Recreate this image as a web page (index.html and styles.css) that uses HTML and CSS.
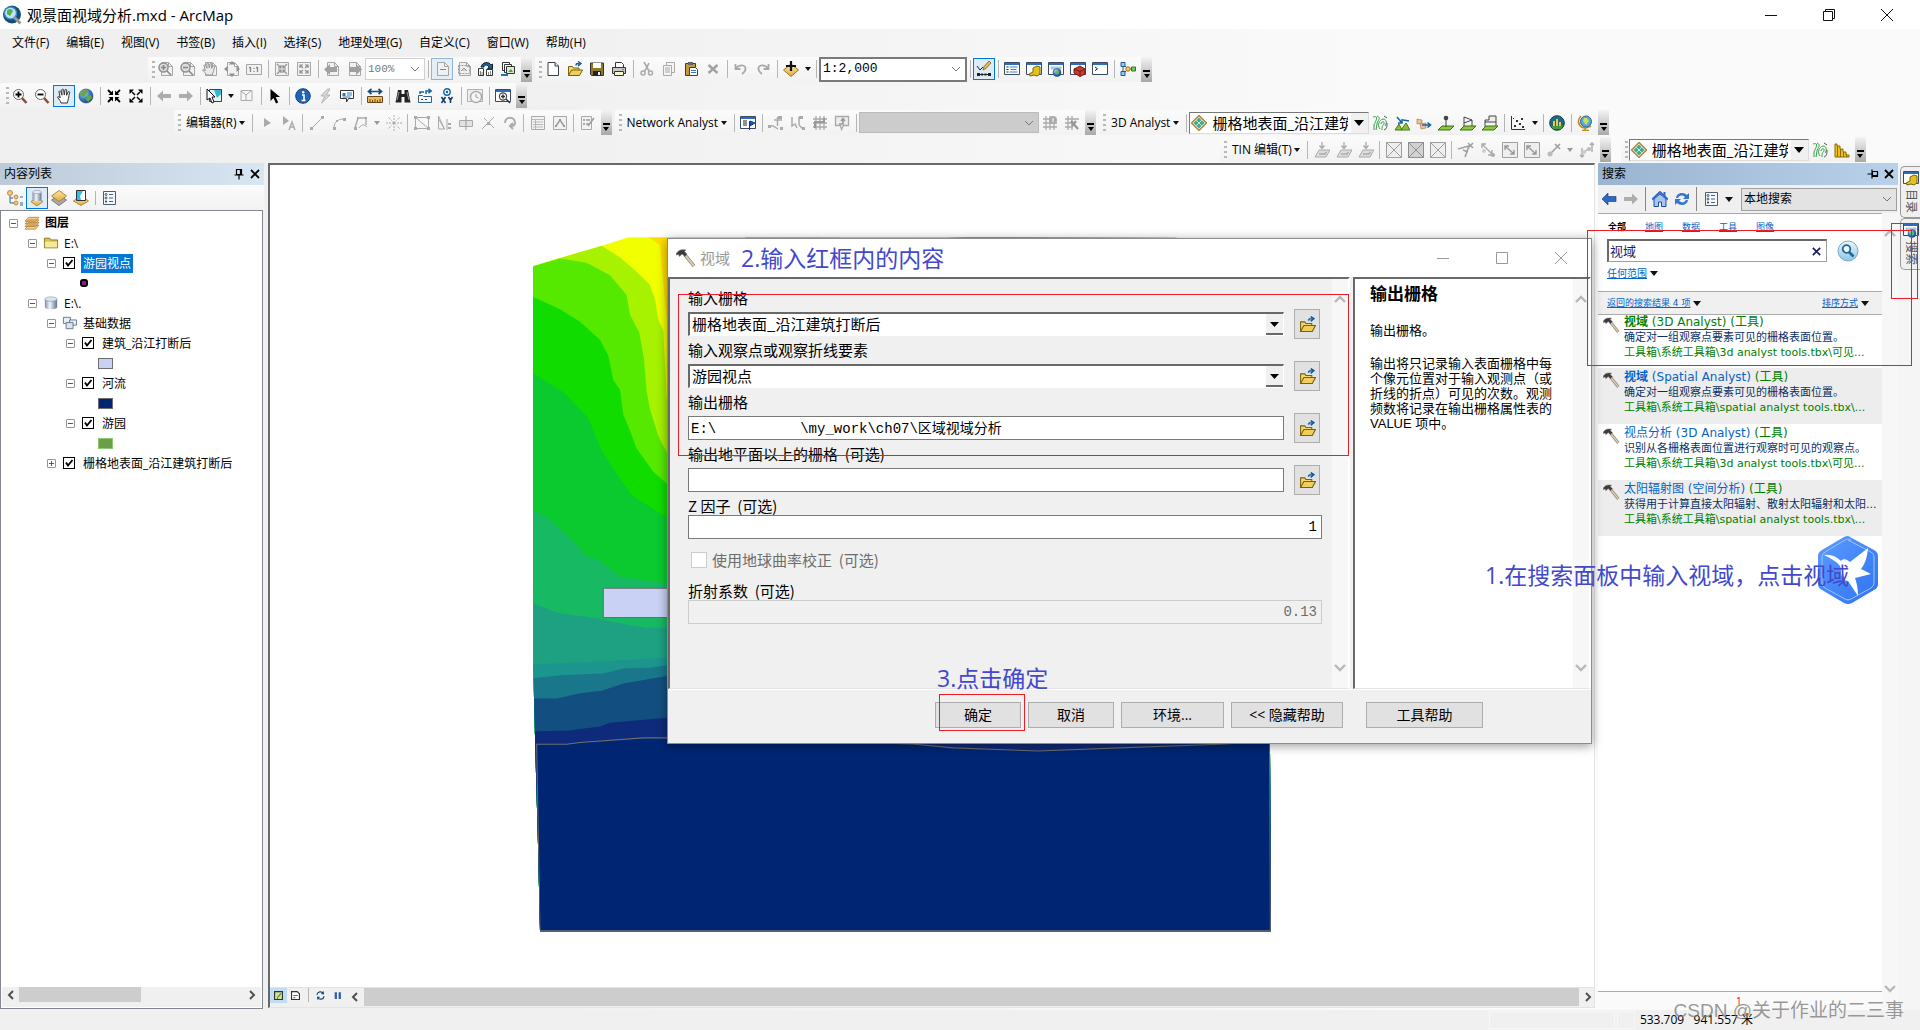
FILE: index.html
```html
<!DOCTYPE html>
<html lang="zh-CN">
<head>
<meta charset="utf-8">
<title>观景面视域分析.mxd - ArcMap</title>
<link rel="stylesheet" href="styles.css">
</head>
<body>
<svg class="defs" aria-hidden="true">
  <defs>
    <linearGradient id="gold" x1="0" y1="0" x2="0" y2="1"><stop offset="0" stop-color="#ffe9a8"/><stop offset="1" stop-color="#e0a93c"/></linearGradient>
    <linearGradient id="steel" x1="0" y1="0" x2="1" y2="0"><stop offset="0" stop-color="#7d8ea6"/><stop offset=".4" stop-color="#f2f6fb"/><stop offset="1" stop-color="#61738f"/></linearGradient>
    <radialGradient id="sea" cx=".35" cy=".3" r=".8"><stop offset="0" stop-color="#bfe4ff"/><stop offset=".5" stop-color="#3a7fc4"/><stop offset="1" stop-color="#123a78"/></radialGradient>
    <linearGradient id="lens" x1="0" y1="0" x2="0" y2="1"><stop offset="0" stop-color="#e9f7fd"/><stop offset="1" stop-color="#8cc6e4"/></linearGradient>
    <linearGradient id="bird" x1="0" y1="0" x2="1" y2="1"><stop offset="0" stop-color="#5c9bff"/><stop offset="1" stop-color="#2f74f0"/></linearGradient>
  </defs>
  <symbol id="page" viewBox="0 0 16 16"><path d="M3.500 1.500h7l4 4v9h-11z" fill="#f1f1f1" stroke="#a6a6a6"/><path d="M10.500 1.500v4h4" fill="none" stroke="#a6a6a6"/></symbol>
  <symbol id="pzin" viewBox="0 0 16 16"><use href="#page"/><circle cx="5.500" cy="6.500" r="4.500" fill="#ddd" stroke="#929292" stroke-width="1.500"/><path d="M3 6.500h5M5.500 4v5M9 10l4 4" stroke="#888" stroke-width="1.600"/></symbol>
  <symbol id="pzout" viewBox="0 0 16 16"><use href="#page"/><circle cx="5.500" cy="6.500" r="4.500" fill="#ddd" stroke="#929292" stroke-width="1.500"/><path d="M3 6.500h5M9 10l4 4" stroke="#888" stroke-width="1.600"/></symbol>
  <symbol id="hand" viewBox="0 0 16 16"><path d="M5 15c-.5-2-1.500-3-3.500-6 .8-1 1.700-.5 2.700.8L3 3.500C3.500 2.500 4.500 2.700 4.800 3.500L6 7.200 5.800 1.700C6.300.8 7.300.9 7.600 1.700L8.300 7 9 1.900c.5-.8 1.500-.7 1.700.2L10.600 7.300 12.200 3.800c.6-.7 1.500-.3 1.500.5-.5 2-1 4-1.200 6-.2 2-1 3-1.200 4.700z" fill="#fff" stroke="#333"/></symbol>
  <symbol id="phand" viewBox="0 0 16 16"><use href="#page"/><path d="M4 14c-.5-2-1.500-3-3.500-5 .8-1 1.700-.5 2.700.8L2 4.500C2.500 3.500 3.500 3.700 3.800 4.500L5 7.200 4.800 2.700C5.300 1.800 6.300 1.900 6.600 2.700L7.300 7 8 2.900c.5-.8 1.500-.7 1.700.2L9.600 7.300 11.200 4.800c.6-.7 1.500-.3 1.500.5-.5 2-1 4-1.200 5-.2 1-1 2-1.200 3.700z" fill="#e9e9e9" stroke="#929292"/></symbol>
  <symbol id="pfull" viewBox="0 0 16 16"><use href="#page"/><path d="M8 0l3 3.500H5zM8 16l3-3.500H5zM0 8l3.500-3v6zM16 8l-3.500-3v6z" fill="#8f8f8f"/></symbol>
  <symbol id="p11" viewBox="0 0 16 16"><path d="M.5 3.500h15v10H.5z" fill="#f1f1f1" stroke="#a6a6a6"/><path d="M4.500 6v5M11.500 6v5M8 7v1M8 10v1M3 6.500h1.500M10 6.500h1.500" stroke="#888" stroke-width="1.300"/></symbol>
  <symbol id="gfixin" viewBox="0 0 16 16"><path d="M1.500 1.500h13v13h-13z" fill="#f1f1f1" stroke="#a6a6a6"/><path d="M3 3l4 4M13 3L9 7M3 13l4-4M13 13l-4-4M7 4v3h-3M9 4v3h3M4 9h3v3M12 9h-3v3" fill="none" stroke="#909090" stroke-width="1.200"/></symbol>
  <symbol id="gfixout" viewBox="0 0 16 16"><path d="M1.500 1.500h13v13h-13z" fill="#f1f1f1" stroke="#a6a6a6"/><path d="M4 4l3 3M12 4L9 7M4 12l3-3M12 12l-3-3M4 7V4h3M12 7V4h-3M4 9v3h3M12 9v3h-3" fill="none" stroke="#909090" stroke-width="1.200"/></symbol>
  <symbol id="pback" viewBox="0 0 16 16"><use href="#page"/><path d="M0 8.500l6-5.500v3h7v5H6v3z" fill="#a0a0a0"/></symbol>
  <symbol id="pfwd" viewBox="0 0 16 16"><use href="#page"/><path d="M16 8.500L10 3v3H3v5h7v3z" fill="#a0a0a0"/></symbol>
  <symbol id="draft" viewBox="0 0 16 16"><use href="#page"/><path d="M6 8.500h6" stroke="#888"/></symbol>
  <symbol id="focus" viewBox="0 0 16 16"><use href="#page"/><path d="M2.500 4.500h11v8h-11z" fill="none" stroke="#999" stroke-dasharray="2 1"/><path d="M5 10l3-3 3 3" fill="#ccc" stroke="#999"/></symbol>
  <symbol id="swap" viewBox="0 0 16 16"><path d="M3 6C4 1 11 0 13 4l1.500-1v5h-5L11 6C9 3 6 4 6 6z" fill="#16629d" stroke="#123"/><path d="M.5 7.500h5v7h-5zM8.500 8.500h6v6h-6z" fill="#fff" stroke="#333"/><path d="M2.500 10v4M4 11v3M10.500 11v3M12.500 10v4" stroke="#888"/></symbol>
  <symbol id="pages" viewBox="0 0 16 16"><path d="M2.500 1.500h7v8h-7z" fill="#fff" stroke="#333"/><path d="M4.500 3.500h7v8h-7z" fill="#fff" stroke="#333"/><path d="M6.500 5.500h8v7h-8z" fill="#d5efcf" stroke="#333"/><path d="M8 11l3-3 2 3" fill="#53a33b"/><path d="M1 13h7v2H1z" fill="#2873b8"/></symbol>
  <symbol id="new" viewBox="0 0 16 16"><path d="M3 1.500h7l3.500 3.500v9.500H3z" fill="#fff" stroke="#38424e"/><path d="M10 1.500V5h3.500" fill="#dce6f2" stroke="#38424e"/></symbol>
  <symbol id="open" viewBox="0 0 16 16"><path d="M1.500 14.500v-9h4l1 1.500h5.500v7z" fill="#f6d873" stroke="#77600f"/><path d="M1.500 14.500l3-5.500h11l-3 5.500z" fill="#f0cd5c" stroke="#77600f"/><path d="M9 4.500c0-2 1-2 3.500-2M11 .5l3 2-3 2.500" fill="none" stroke="#155a9c" stroke-width="1.400"/></symbol>
  <symbol id="save" viewBox="0 0 16 16"><path d="M1.500 2h13v12.500h-12l-1-1z" fill="#8c7a28" stroke="#333"/><path d="M4 2h8v5H4z" fill="#fff"/><path d="M4 10h8v4.500H4z" fill="#222"/><path d="M9 11h2v3H9z" fill="#eee"/></symbol>
  <symbol id="print" viewBox="0 0 16 16"><path d="M4.500 6V1.500h6l2 2V6" fill="#fff" stroke="#333"/><path d="M1.500 6.500h13v6h-13z" fill="#c9c9c9" stroke="#333"/><path d="M3.500 10.500h9v4h-9z" fill="#f8f7d0" stroke="#333"/><path d="M11 8h2v1h-2z" fill="#3b3"/></symbol>
  <symbol id="cut" viewBox="0 0 16 16"><path d="M5 1l5 9M10 2L7 8l-2 3" fill="none" stroke="#aaa" stroke-width="1.600"/><circle cx="4" cy="12" r="2" fill="none" stroke="#aaa" stroke-width="1.500"/><circle cx="11.500" cy="12" r="2" fill="none" stroke="#aaa" stroke-width="1.500"/></symbol>
  <symbol id="copy" viewBox="0 0 16 16"><path d="M5.500 1.500h8v10h-8z" fill="#f4f4f4" stroke="#aaa"/><path d="M2.500 4.500h8v10h-8z" fill="#f4f4f4" stroke="#aaa"/><path d="M4 7h5M4 9h5M4 11h5" stroke="#aaa"/></symbol>
  <symbol id="paste" viewBox="0 0 16 16"><path d="M2.500 2.500h10v12h-10z" fill="#c79a3c" stroke="#4b3a14"/><path d="M5 1h5v3H5z" fill="#666"/><path d="M6.500 6.500h6l2 2v6h-8z" fill="#fff" stroke="#345"/><path d="M8 9.500h5M8 11.500h5" stroke="#3a78b5"/></symbol>
  <symbol id="del" viewBox="0 0 16 16"><path d="M3.500 4l9 8M12.500 4l-9 8" stroke="#a2a2a2" stroke-width="2.400"/></symbol>
  <symbol id="undo" viewBox="0 0 16 16"><path d="M2.500 3v5h5M3 7.500C6 3 13 3.500 12.500 8c0 2-1.500 3.500-3.500 5" fill="none" stroke="#aaa" stroke-width="1.800"/></symbol>
  <symbol id="redo" viewBox="0 0 16 16"><path d="M13.500 3v5h-5M13 7.500C10 3 3 3.500 3.500 8c0 2 1.500 3.500 3.500 5" fill="none" stroke="#aaa" stroke-width="1.800"/></symbol>
  <symbol id="add" viewBox="0 0 16 16"><path d="M8 3l7.500 6L8 15.500.5 9z" fill="url(#gold)" stroke="#9a7320"/><path d="M8 0v10M3 5h10" stroke="#111" stroke-width="2.200"/></symbol>
  <symbol id="edit" viewBox="0 0 16 16"><path d="M1 5l3 4 3-3M2 13.500h12" fill="none" stroke="#222"/><path d="M7 9l1-3.500L13 0l2 2-5 5.500z" fill="#f2b64c" stroke="#6b4a12" stroke-width=".7"/><path d="M1 12h3v3H1zM5 12.500h2v2H5zM8.500 12.500h2v2h-2zM12 12h3v3h-3z" fill="#222"/></symbol>
  <symbol id="win" viewBox="0 0 16 16"><path d="M.5 1.500h15v12H.5z" fill="#fff" stroke="#3b4a60"/><path d="M1 2h14v2H1z" fill="#2d6dbf"/></symbol>
  <symbol id="wtoc" viewBox="0 0 16 16"><use href="#win"/><path d="M2.500 6h2M2.500 8.500h2M2.500 11h2" stroke="#222"/><path d="M5.500 6h8M6.500 8.500h6M5.500 11h8" stroke="#3b82c8"/></symbol>
  <symbol id="wcat" viewBox="0 0 16 16"><use href="#win"/><path d="M7 7l4-2 3 1v7l-3 2-3-1-4 1-1-2 4-2z" fill="#e3c21d" stroke="#77640c"/></symbol>
  <symbol id="wsearch" viewBox="0 0 16 16"><use href="#win"/><path d="M3 6h10v2H3z" fill="#ccd8ea" stroke="#7990ae" stroke-width=".5"/><circle cx="9" cy="11.500" r="4" fill="url(#sea)" stroke="#1b4d7d" stroke-width=".6"/><path d="M7 10l3-1 1 3-2 2z" fill="#71b84d"/></symbol>
  <symbol id="wbox" viewBox="0 0 16 16"><use href="#win"/><path d="M4 8l6-3 5 3v5l-5 2.500L4 12z" fill="#c93c31" stroke="#701810"/><path d="M4 8l6 2.500L15 8M10 10.500v5" stroke="#701810" fill="none"/></symbol>
  <symbol id="wpy" viewBox="0 0 16 16"><use href="#win"/><path d="M3 6l2.500 1.800L3 9.600" fill="none" stroke="#222"/></symbol>
  <symbol id="model" viewBox="0 0 16 16"><path d="M3 3v10M3 3l5 5-5 5M8 8h5" fill="none" stroke="#456"/><path d="M1 1.500h4v4H1zM1 10.500h4v4H1z" fill="#9cc8f0" stroke="#1d5a9a"/><circle cx="8" cy="8" r="2.200" fill="#f4d34f" stroke="#93761a"/><path d="M11.500 6h4v4h-4z" fill="#74c860" stroke="#2a7a22"/></symbol>
  <symbol id="zin" viewBox="0 0 16 16"><path d="M10 10l4.500 5" stroke="#8b4b37" stroke-width="2.600"/><circle cx="6.500" cy="6.500" r="5" fill="#fff" stroke="#666"/><path d="M3.500 6.500h6M6.500 3.500v6" stroke="#000" stroke-width="1.800"/></symbol>
  <symbol id="zout" viewBox="0 0 16 16"><path d="M10 10l4.500 5" stroke="#8b4b37" stroke-width="2.600"/><circle cx="6.500" cy="6.500" r="5" fill="#fff" stroke="#666"/><path d="M3.500 6.500h6" stroke="#000" stroke-width="1.800"/></symbol>
  <symbol id="globe" viewBox="0 0 16 16"><circle cx="8" cy="8" r="7" fill="url(#sea)" stroke="#174472" stroke-width=".6"/><path d="M5 2c3-1 4 0 5 2L8 6 6 9 2 7zM9 8l4-1 1 3-4 4-2-3z" fill="#68a83c"/></symbol>
  <symbol id="fixin" viewBox="0 0 16 16"><path d="M2 2l4 4M14 2l-4 4M2 14l4-4M14 14l-4-4" stroke="#000" stroke-width="1.800"/><path d="M7 2.500V7H2.500zM9 2.500V7h4.500zM7 13.500V9H2.500zM9 13.500V9h4.500z"/></symbol>
  <symbol id="fixout" viewBox="0 0 16 16"><path d="M4 4l3 3M12 4L9 7M4 12l3-3M12 12l-3-3" stroke="#000" stroke-width="1.500"/><path d="M1.500 1.500H6L1.500 6zM14.500 1.500H10L14.500 6zM1.500 14.500H6L1.500 10zM14.500 14.500H10l4.500-4.500z"/></symbol>
  <symbol id="gback" viewBox="0 0 16 16"><path d="M1 8l6-5.500v3.500h8v4H7v3.500z" fill="#adadad"/></symbol>
  <symbol id="gfwd" viewBox="0 0 16 16"><path d="M15 8L9 2.500V6H1v4h8v3.500z" fill="#adadad"/></symbol>
  <symbol id="selfeat" viewBox="0 0 16 16"><path d="M3.500 1.500h12v12h-12z" fill="#e6f3ec" stroke="#345"/><path d="M8 2h7v4l-4 4z" fill="#35b8d8"/><path d="M1 1l8 8H6l2 5-2 1-2-5-3 2z" fill="#fff" stroke="#111"/></symbol>
  <symbol id="clear" viewBox="0 0 16 16"><path d="M2 2.500h11v10H2zM2 3l5 4 5-4M7 7v5" fill="#f6f6f6" stroke="#aaa"/></symbol>
  <symbol id="cursor" viewBox="0 0 16 16"><path d="M3.500 1v12l3-3 2.500 5.500 2.200-1L8.700 9H13z"/></symbol>
  <symbol id="info" viewBox="0 0 16 16"><circle cx="8" cy="8" r="7.300" fill="#2264b8" stroke="#123f7e"/><path d="M7 7h2v5.500M6.500 12.500h4" fill="none" stroke="#fff" stroke-width="1.600"/><circle cx="8.200" cy="4.200" r="1.200" fill="#fff"/></symbol>
  <symbol id="bolt" viewBox="0 0 16 16"><path d="M10.500 1L4 8h4l-3.500 7L13 7H9l4-6z" fill="#ddd" stroke="#b0b0b0"/></symbol>
  <symbol id="popup" viewBox="0 0 16 16"><path d="M1.500 2.500h13v8h-5L7.500 14V10.500h-6z" fill="#fff" stroke="#333"/><path d="M3.500 5h3v3h-3z" fill="#2d77c2"/><path d="M8 5h5M8 7h5M3.500 9h8" stroke="#2d77c2"/></symbol>
  <symbol id="ruler" viewBox="0 0 16 16"><path d="M2 3.500h12M4.500 1L1.500 3.500l3 2.500M11.500 1l3 2.500-3 2.500" stroke="#134f86" fill="none" stroke-width="1.700"/><path d="M.5 8.500h15v6H.5z" fill="#eebb62" stroke="#6a4917"/><path d="M3 14v-3M5.500 14v-2M8 14v-3M10.500 14v-2M13 14v-3" stroke="#6a4917"/></symbol>
  <symbol id="bino" viewBox="0 0 16 16"><path d="M3 2h3.500v4h3V2H13l2.500 12.500h-6V9h-3v5.500h-6z" fill="#222"/><path d="M4 4l-2 8M12 4l2 8" stroke="#999"/></symbol>
  <symbol id="route" viewBox="0 0 16 16"><path d="M1.500 7.500h4l1 1h8v6h-13z" fill="#f3f6fa" stroke="#345f85"/><path d="M4 11.500h2M8 11.500h2" stroke="#246"/><path d="M9 6V3h4M11.500.8L14.200 3l-2.700 2.200M3 6V4h4" fill="none" stroke="#1564a5" stroke-width="1.500"/></symbol>
  <symbol id="xy" viewBox="0 0 16 16"><circle cx="8" cy="4" r="3.200" fill="none" stroke="#1564a5" stroke-width="1.400"/><circle cx="8" cy="4" r="1.200" fill="#1564a5"/><path d="M2.500 9l4 6M6.500 9l-4 6M9.500 9l2 3 2-3M11.500 12v3" fill="none" stroke="#123f72" stroke-width="1.600"/></symbol>
  <symbol id="clock" viewBox="0 0 16 16"><path d="M.5 1.500h15v12H.5z" fill="#eee" stroke="#b0b0b0"/><circle cx="9" cy="9" r="5.500" fill="#f4f4f4" stroke="#aaa" stroke-width="1.400"/><path d="M9 6v3l2.500 1" fill="none" stroke="#999"/></symbol>
  <symbol id="viewer" viewBox="0 0 16 16"><use href="#win"/><circle cx="8" cy="8.500" r="3.600" fill="#fff" stroke="#444" stroke-width="1.200"/><path d="M6 8.500h4M8 6.500v4M11 11l4 4" stroke="#333" stroke-width="1.500"/></symbol>
  <symbol id="gcur" viewBox="0 0 16 16"><path d="M5 3l7 5-7 4z" fill="#aaa"/></symbol>
  <symbol id="gcura" viewBox="0 0 16 16"><path d="M2 1l6 5-6 4z" fill="#aaa"/><path d="M8 15l3-8 3 8M9.200 12h3.600" fill="none" stroke="#aaa" stroke-width="1.400"/></symbol>
  <symbol id="seg" viewBox="0 0 16 16"><path d="M3 13L13 3" stroke="#aaa"/><path d="M1 12h3v3H1zM12 1h3v3h-3z" fill="#aaa"/></symbol>
  <symbol id="arc" viewBox="0 0 16 16"><path d="M3 13C3 7 7 4 13 4" fill="none" stroke="#aaa"/><path d="M2 12h3v3H2zM12 3h3v3h-3zM5 5h2v2H5z" fill="#aaa"/></symbol>
  <symbol id="poly" viewBox="0 0 16 16"><path d="M2 13L5 3h8v7" fill="none" stroke="#aaa" stroke-width="1.400"/><path d="M1 12h3v3H1zM4 2h2v2H4zM12 2h2v2h-2z" fill="#aaa"/><path d="M6 13c3-4 5-4 8-1" fill="none" stroke="#aaa"/></symbol>
  <symbol id="burst" viewBox="0 0 16 16"><path d="M8 0v5M8 11v5M0 8h5M11 8h5M2.500 2.500l3 3M13.500 2.500l-3 3M2.500 13.500l3-3M13.500 13.500l-3-3" stroke="#aaa" stroke-dasharray="2 1"/><path d="M6.500 6.500h3v3h-3z" fill="#aaa"/></symbol>
  <symbol id="tri" viewBox="0 0 16 16"><path d="M1.500 2.500h13v11h-13zM1.500 2.500l13 11" fill="none" stroke="#aaa"/><path d="M0 1h3v3H0zM13 1h3v3h-3zM13 12h3v3h-3zM0 12h3v3H0z" fill="#aaa"/></symbol>
  <symbol id="tri2" viewBox="0 0 16 16"><path d="M2.500 1v13h6zM2.500 4l6 10M11 4v11" fill="none" stroke="#aaa"/><path d="M12 8h3v2h-3zM12 12h3v2h-3z" fill="#aaa"/></symbol>
  <symbol id="split" viewBox="0 0 16 16"><path d="M1.500 5.500h13v6h-13z" fill="#e2e2e2" stroke="#aaa"/><path d="M8 1v14" stroke="#999"/></symbol>
  <symbol id="cross" viewBox="0 0 16 16"><path d="M2 14L14 2M4 3l3 3M10 9l4 4" stroke="#aaa"/><path d="M7 7h3v3H7z" fill="#aaa"/></symbol>
  <symbol id="rot" viewBox="0 0 16 16"><path d="M3 8C3 1 13 1 13 8c0 2-2 3-4 3M11 8l-3 3 3 3" fill="none" stroke="#aaa" stroke-width="2"/></symbol>
  <symbol id="table" viewBox="0 0 16 16"><path d="M1.500 1.500h13v13h-13z" fill="#f2f2f2" stroke="#aaa"/><path d="M1.500 4.500h13M3 7h10M3 9.500h10M3 12h10M5.500 5v9" stroke="#bbb"/></symbol>
  <symbol id="sketch" viewBox="0 0 16 16"><path d="M1.500 1.500h13v13h-13z" fill="#f2f2f2" stroke="#aaa"/><path d="M4 11l4-6 4 6" fill="none" stroke="#999" stroke-width="1.400"/><path d="M3 10h2v2H3zM7 4h2v2H7zM11 10h2v2h-2z" fill="#999"/></symbol>
  <symbol id="form" viewBox="0 0 16 16"><path d="M1.500 1.500h10v13h-10z" fill="#f2f2f2" stroke="#aaa"/><path d="M3 4h2v2H3zM3 8h2v2H3z" fill="#aaa"/><path d="M6 5h4M6 9h3M8 11l6-8" stroke="#999" stroke-width="1.500"/></symbol>
  <symbol id="nawin" viewBox="0 0 16 16"><use href="#win"/><path d="M3 6h4M3 8h4M3 10h4" stroke="#222"/><path d="M9.500 6v9M10 6l5 2-5 3z" fill="#1c55d6" stroke="#123a8c"/></symbol>
  <symbol id="naadd" viewBox="0 0 16 16"><path d="M1 11h4l5 3M9.500 2v9M6 5h8" fill="none" stroke="#aaa" stroke-width="1.400"/><path d="M0 10h3v3H0zM12 12h3v3h-3zM10 1h4v3h-4z" fill="#aaa"/></symbol>
  <symbol id="nasel" viewBox="0 0 16 16"><path d="M2 2v9l3-2 2 4M9 10V2M9 10l4 4" fill="none" stroke="#aaa" stroke-width="1.500"/><path d="M9 1h4v3H9zM12 12h3v3h-3z" fill="#aaa"/></symbol>
  <symbol id="grid" viewBox="0 0 16 16"><path d="M1 4h14M1 8h14M1 12h14M4 1v14M8 1v14M12 1v14" stroke="#aaa" stroke-width="1.300"/><path d="M3 13V7h9V3" fill="none" stroke="#999" stroke-width="2"/></symbol>
  <symbol id="dir" viewBox="0 0 16 16"><path d="M1.500 1.500h13v9h-5l-2 4-1-4h-5z" fill="#eee" stroke="#aaa" stroke-width="1.300"/><path d="M5 9h4V4M7 6l2-2.500L11 6" fill="none" stroke="#999" stroke-width="1.600"/></symbol>
  <symbol id="griq" viewBox="0 0 16 16"><path d="M1 4h9M1 8h14M1 12h14M4 1v14M8 1v14M12 9v6" stroke="#aaa" stroke-width="1.300"/><circle cx="11" cy="5" r="4" fill="#aaa"/><path d="M11 3v4" stroke="#fff"/></symbol>
  <symbol id="griw" viewBox="0 0 16 16"><path d="M1 4h14M1 8h8M1 12h8M4 1v14M8 1v14" stroke="#aaa" stroke-width="1.300"/><path d="M7 6l7 8M12 6l-4 5" stroke="#999" stroke-width="2.400"/></symbol>
  <symbol id="layer" viewBox="0 0 16 16"><path d="M8 .5L15.500 8 8 15.500.5 8z" fill="#f4ead4" stroke="#a8803a" stroke-width="1.300"/><path d="M8 2.500L13.500 8 8 13.500 2.500 8z" fill="#45a98f"/><path d="M5.200 5.200l5.600 5.600M10.800 5.200l-5.600 5.600" stroke="#c5eadb"/></symbol>
  <symbol id="contour" viewBox="0 0 16 16"><path d="M1 2c7-2 2 5 1 8v5M5 1c5 2 0 5 0 8l-1 6M8 14c-3-4-1-9 3-10 4 0 4 5 2 7M9 9c0-3 4-3 3 0-1 2-2 1-2 6" fill="none" stroke="#35a047"/><path d="M12 1l3 2M12 15c3-1 3-4 3-7" stroke="#555" fill="none"/></symbol>
  <symbol id="steep" viewBox="0 0 16 16"><path d="M1 15l4-6 3 6zM7 15l5-7 4 7z" fill="#8bbf3a" stroke="#4a781c"/><path d="M3 2l5 6M8 4v4H4M9 5l6 1" fill="none" stroke="#1563a8" stroke-width="1.500"/></symbol>
  <symbol id="los" viewBox="0 0 16 16"><path d="M1 4l5 1v3l-5 1zM4 9l6-1v5l-5 1z" fill="#f3bd8f" stroke="#a36b3a" stroke-width=".6"/><path d="M6 10h8M11.500 7.500L14.500 10l-3 2.500" fill="none" stroke="#1563a8" stroke-width="1.600"/></symbol>
  <symbol id="pt3" viewBox="0 0 16 16"><path d="M4 11h12l-4 4H0z" fill="#8cc540" stroke="#3f7217"/><path d="M8 3v9" stroke="#444"/><circle cx="8" cy="3" r="2.300" fill="#444"/></symbol>
  <symbol id="ln3" viewBox="0 0 16 16"><path d="M4 11h12l-4 4H0z" fill="#8cc540" stroke="#3f7217"/><path d="M4 2l8 3-8 3M4 2v9M12 5v6" fill="none" stroke="#444"/></symbol>
  <symbol id="pg3" viewBox="0 0 16 16"><path d="M4 11h12l-4 4H0z" fill="#8cc540" stroke="#3f7217"/><path d="M7 1h7v6H3v-2h4zM3 7v5M14 7v4" fill="#eee" stroke="#444"/></symbol>
  <symbol id="plot" viewBox="0 0 16 16"><path d="M1.500 1v13.500H15" fill="none" stroke="#333"/><path d="M4 10h2v2H4zM6 5h2v2H6zM9 8h2v2H9zM11 3h2v2h-2zM12 11h2v2h-2zM3 3h1v1H3z" fill="#333"/></symbol>
  <symbol id="scene" viewBox="0 0 16 16"><circle cx="8" cy="8" r="7.300" fill="#1d6b7c" stroke="#103c52"/><path d="M4 11V6h2v5M7 11V4h2v7M10 11V7h2v4" fill="#e8c84c"/><path d="M2 11h12l-2 3H4z" fill="#4a9a35"/></symbol>
  <symbol id="gl3" viewBox="0 0 16 16"><path d="M4 1C-1 6 2 13 9 13l5-2M8 13v2M5 15.500h7" fill="none" stroke="#b98b1f" stroke-width="1.600"/><circle cx="9" cy="6.500" r="5.500" fill="#58a6dc" stroke="#2a6598"/><path d="M7 3l3 0 2 3-3 4-3-4z" fill="#c9df5b"/></symbol>
  <symbol id="tin1" viewBox="0 0 16 16"><path d="M5 8h11l-4 7H1z" fill="#ddd" stroke="#aaa"/><path d="M8 0v6M5.500 3.500L8 6.500l2.500-3M5 12h6l1.500-2" fill="none" stroke="#aaa" stroke-width="1.300"/></symbol>
  <symbol id="boxx" viewBox="0 0 16 16"><path d="M.5.500h15v15H.5zM.5.500l15 15M15.500.5l-15 15" fill="#eee" stroke="#a0a0a0"/></symbol>
  <symbol id="boxd" viewBox="0 0 16 16"><path d="M.5.500h15v15H.5zM.5.500l15 15M15.500.5l-15 15" fill="#d2d2d2" stroke="#8f8f8f"/></symbol>
  <symbol id="tin5" viewBox="0 0 16 16"><path d="M0 7l11-3-4 11M5 8l5 2M10 1l5 5M15 1l-5 5" fill="none" stroke="#a0a0a0" stroke-width="1.600"/></symbol>
  <symbol id="tin6" viewBox="0 0 16 16"><path d="M2 2l10 10M2 6V2h4M12 8v5H8" fill="none" stroke="#aaa" stroke-width="1.400"/><circle cx="4" cy="9" r="2" fill="#ccc"/><circle cx="13" cy="13" r="2" fill="#aaa"/></symbol>
  <symbol id="tin7" viewBox="0 0 16 16"><path d="M.5.500h15v15H.5z" fill="#eee" stroke="#a0a0a0"/><path d="M3 4l9 8M3 8V4h4M12 8v4H8" fill="none" stroke="#999" stroke-width="1.400"/></symbol>
  <symbol id="tin9" viewBox="0 0 16 16"><path d="M4 12L13 3M9 2l5 5M14 2L9 7" fill="none" stroke="#a0a0a0" stroke-width="1.700"/><circle cx="4" cy="12" r="2.500" fill="#bbb"/></symbol>
  <symbol id="tin8" viewBox="0 0 16 16"><path d="M5 10l6-4M13 10V1M11 3l2-2 2 2M3 6v9M1 13l2 2 2-2" fill="none" stroke="#aaa" stroke-width="1.400"/><circle cx="5" cy="10" r="2" fill="#ccc"/><circle cx="10" cy="7" r="2" fill="#bbb"/></symbol>
  <symbol id="bars" viewBox="0 0 16 16"><path d="M1 15V2h2v2h3v3h3v3h3v3h3v2z" fill="#efc31a" stroke="#8b6b08"/><path d="M3.500 4v11M6.500 7v8M9.500 10v5M12.500 12v3" stroke="#8b6b08"/></symbol>
  <symbol id="hammer" viewBox="0 0 20 20"><path d="M9 7l9 11" stroke="#7d7260" stroke-width="3.400"/><path d="M9 7l9 11" stroke="#d9ceb4" stroke-width="2"/><path d="M0 7c1-4 4-6 10-5L8.500 3.500 11 6 9 8.500 6 6 3.500 8.500 2.500 6.500z" fill="#3c3c3c" stroke="#777" stroke-width=".6"/></symbol>
  <symbol id="app" viewBox="0 0 20 20"><circle cx="10" cy="9.500" r="9" fill="#184d78"/><circle cx="8.500" cy="8" r="6" fill="#bfe3f5" stroke="#3b8cc0" stroke-width="1.300"/><path d="M5 6c2-3 5-2 6 0l-3 5-3-2z" fill="#58b148"/><path d="M12.500 12.500l6 6" stroke="#999" stroke-width="3"/></symbol>
  <symbol id="cyl" viewBox="0 0 16 16"><path d="M1 3.500v9c0 3.500 14 3.500 14 0v-9z" fill="url(#steel)"/><ellipse cx="8" cy="3.500" rx="7" ry="2.500" fill="#dce6f2" stroke="#8292a8" stroke-width=".7"/></symbol>
  <symbol id="tocdraw" viewBox="0 0 16 16"><circle cx="3" cy="3" r="2.500" fill="#f3c67c" stroke="#c08c3e"/><circle cx="9" cy="7" r="2" fill="#f3c67c" stroke="#c08c3e"/><circle cx="9" cy="13" r="2" fill="#f3c67c" stroke="#c08c3e"/><path d="M3 6v7h4M3 8h3M13 7h3M13 13h3M13 15h3" fill="none" stroke="#35688f"/></symbol>
  <symbol id="tocsrc" viewBox="0 0 16 16"><path d="M8 8l6 3.500L8 16l-6-4.500z" fill="url(#gold)" stroke="#b18635"/><path d="M3.500 2v7.500c0 2 9 2 9 0V2z" fill="url(#steel)"/><ellipse cx="8" cy="2" rx="4.500" ry="1.500" fill="#e9f0f8" stroke="#8292a8" stroke-width=".6"/></symbol>
  <symbol id="tocvis" viewBox="0 0 16 16"><path d="M8 5l7.500 5L8 15.500.5 10z" fill="#aaa" stroke="#777"/><path d="M8 .5L15.500 6 8 11.500.5 6z" fill="url(#gold)" stroke="#b18635"/></symbol>
  <symbol id="tocsel" viewBox="0 0 16 16"><path d="M8 6l7.500 5L8 15.500.5 11z" fill="url(#gold)" stroke="#b18635"/><path d="M3.500.5h9v10h-9z" fill="#fff" stroke="#333"/><path d="M4 1h6L7 6l1 4H4z" fill="#2cc0e6"/></symbol>
  <symbol id="opts" viewBox="0 0 16 16"><path d="M2.500 1.500h12v13h-12z" fill="#f5f9fd" stroke="#4a5d75"/><circle cx="5" cy="4.500" r="1" fill="none" stroke="#234" stroke-width=".8"/><circle cx="5" cy="8" r="1" fill="none" stroke="#234" stroke-width=".8"/><circle cx="5" cy="11.500" r="1" fill="#234"/><path d="M8 4.500h4M8 8h4M8 11.500h4" stroke="#47617f"/></symbol>
  <symbol id="layers" viewBox="0 0 16 16"><path d="M4 10.500h12L12 15H0zM4 7.500h12L12 12H0zM4 4.500h12L12 9H0zM4 1.500h12L12 6H0z" fill="#f4cd8c" stroke="#ab722e" stroke-width=".8"/></symbol>
  <symbol id="folder" viewBox="0 0 16 16"><path d="M.5 13.500v-11h6l1.500 2h7.500v9z" fill="#d8c24e" stroke="#7d6c18"/><path d="M1 6.500h14v6.500H1z" fill="#f5e998"/></symbol>
  <symbol id="dset" viewBox="0 0 16 16"><path d="M.5 1.500h8v7h-8z" fill="#e9eef5" stroke="#5d6f87"/><path d="M7.500 4.500h8v6h-8z" fill="#e9eef5" stroke="#5d6f87"/><path d="M3.500 7.500h8v7h-8z" fill="#dbe5f0" stroke="#5d6f87"/></symbol>
  <symbol id="home" viewBox="0 0 16 16"><path d="M2 8v7.500h4.500V11h3v4.500H14V8L8 3z" fill="#a9c6ee" stroke="#1e4f9e"/><path d="M0 8.500L8 1l8 7.500M12.500 1v4" fill="none" stroke="#2f6bc6" stroke-width="2"/></symbol>
  <symbol id="refresh" viewBox="0 0 16 16"><path d="M2 7c1-6 8-6 11-3l2-2v6H9l2-2C8 4 6 4 4 7zM14 9c-1 6-8 6-11 3l-2 2V8h6l-2 2c3 2 5 2 7-1z" fill="#3475ce"/></symbol>
  <symbol id="bback" viewBox="0 0 16 16"><path d="M1 8l6-6v3.500h8v5H7V14z" fill="#2d69c4" stroke="#194587" stroke-width=".7"/></symbol>
  <symbol id="pin" viewBox="0 0 12 12"><path d="M3.500 1.500h5v5h-5zM1.500 7h9M6 7v4.500M7.500 2v5" fill="none" stroke="#000" stroke-width="1.200"/></symbol>
  <symbol id="x" viewBox="0 0 12 12"><path d="M2 2l8 8M10 2l-8 8" stroke="currentColor" stroke-width="1.800"/></symbol>
  <symbol id="up" viewBox="0 0 12 12"><path d="M1 9l5-5 5 5" fill="none" stroke="#b8b8b8" stroke-width="2.400"/></symbol>
  <symbol id="down" viewBox="0 0 12 12"><path d="M1 3l5 5 5-5" fill="none" stroke="#b8b8b8" stroke-width="2.400"/></symbol>
  <symbol id="left" viewBox="0 0 12 12"><path d="M8 2L4 6l4 4" fill="none" stroke="#505050" stroke-width="2"/></symbol>
  <symbol id="right" viewBox="0 0 12 12"><path d="M4 2l4 4-4 4" fill="none" stroke="#505050" stroke-width="2"/></symbol>
</svg>

<header class="titlebar">
  <svg class="appicon"><use href="#app"/></svg>
  <h1>观景面视域分析.mxd - ArcMap</h1>
  <div class="winctl">
    <button title="最小化"><svg viewBox="0 0 14 14"><path d="M1 7.500h12"/></svg></button>
    <button title="还原"><svg viewBox="0 0 14 14"><path d="M1.500 3.500h9v9h-9zM3.500 3.500v-2h9v9h-2"/></svg></button>
    <button title="关闭"><svg viewBox="0 0 14 14"><path d="M1 1l12 12M13 1L1 13"/></svg></button>
  </div>
</header>

<nav class="menu">
  <button>文件(F)</button><button>编辑(E)</button><button>视图(V)</button><button>书签(B)</button><button>插入(I)</button><button>选择(S)</button><button>地理处理(G)</button><button>自定义(C)</button><button>窗口(W)</button><button>帮助(H)</button>
</nav>

<section class="rows">
  <div class="row row1">
    <div class="bar">
      <i class="grip"></i>
      <button class="tb" title="放大页面"><svg><use href="#pzin"/></svg></button><button class="tb" title="缩小页面"><svg><use href="#pzout"/></svg></button><button class="tb" title="平移页面"><svg><use href="#phand"/></svg></button><button class="tb" title="整页"><svg><use href="#pfull"/></svg></button><button class="tb" title="1:1"><svg><use href="#p11"/></svg></button>
      <i class="sep"></i>
      <button class="tb" title="固定放大"><svg><use href="#gfixin"/></svg></button><button class="tb" title="固定缩小"><svg><use href="#gfixout"/></svg></button>
      <i class="sep"></i>
      <button class="tb" title="上一范围"><svg><use href="#pback"/></svg></button><button class="tb" title="下一范围"><svg><use href="#pfwd"/></svg></button>
      <select class="pct" aria-label="页面缩放"><option>100%</option></select>
      <i class="sep"></i>
      <button class="tb on" title="草图模式"><svg><use href="#draft"/></svg></button><button class="tb" title="焦点数据框"><svg><use href="#focus"/></svg></button><button class="tb" title="更改布局"><svg><use href="#swap"/></svg></button><button class="tb" title="数据驱动页面"><svg><use href="#pages"/></svg></button>
      <button class="more" title="工具条选项"></button>
    </div>
    <div class="bar">
      <i class="grip"></i>
      <button class="tb" title="新建"><svg><use href="#new"/></svg></button><button class="tb" title="打开"><svg><use href="#open"/></svg></button><button class="tb" title="保存"><svg><use href="#save"/></svg></button><button class="tb" title="打印"><svg><use href="#print"/></svg></button>
      <i class="sep"></i>
      <button class="tb" title="剪切"><svg><use href="#cut"/></svg></button><button class="tb" title="复制"><svg><use href="#copy"/></svg></button><button class="tb" title="粘贴"><svg><use href="#paste"/></svg></button><button class="tb" title="删除"><svg><use href="#del"/></svg></button>
      <i class="sep"></i>
      <button class="tb" title="撤消"><svg><use href="#undo"/></svg></button><button class="tb" title="恢复"><svg><use href="#redo"/></svg></button>
      <i class="sep"></i>
      <button class="tb" title="添加数据"><svg><use href="#add"/></svg></button><i class="dd"></i>
      <i class="sep"></i>
      <select class="scale" aria-label="比例尺"><option>1:2,000</option></select>
      <i class="sep"></i>
      <button class="tb on" title="编辑器工具条"><svg><use href="#edit"/></svg></button>
      <i class="sep"></i>
      <button class="tb" title="内容列表"><svg><use href="#wtoc"/></svg></button><button class="tb" title="目录"><svg><use href="#wcat"/></svg></button><button class="tb" title="搜索"><svg><use href="#wsearch"/></svg></button><button class="tb" title="工具箱"><svg><use href="#wbox"/></svg></button><button class="tb" title="Python"><svg><use href="#wpy"/></svg></button>
      <i class="sep"></i>
      <button class="tb" title="模型构建器"><svg><use href="#model"/></svg></button>
      <button class="more" title="工具条选项"></button>
    </div>
  </div>

  <div class="row row2">
    <div class="bar">
      <i class="grip"></i>
      <button class="tb" title="放大"><svg><use href="#zin"/></svg></button><button class="tb" title="缩小"><svg><use href="#zout"/></svg></button><button class="tb on" title="平移"><svg><use href="#hand"/></svg></button><button class="tb" title="全图"><svg><use href="#globe"/></svg></button>
      <i class="sep"></i>
      <button class="tb" title="固定比例放大"><svg><use href="#fixin"/></svg></button><button class="tb" title="固定比例缩小"><svg><use href="#fixout"/></svg></button>
      <i class="sep"></i>
      <button class="tb" title="返回"><svg><use href="#gback"/></svg></button><button class="tb" title="前进"><svg><use href="#gfwd"/></svg></button>
      <i class="sep"></i>
      <button class="tb" title="选择要素"><svg><use href="#selfeat"/></svg></button><i class="dd"></i><button class="tb" title="清除所选"><svg><use href="#clear"/></svg></button>
      <i class="sep"></i>
      <button class="tb" title="选择元素"><svg><use href="#cursor"/></svg></button>
      <i class="sep"></i>
      <button class="tb" title="识别"><svg><use href="#info"/></svg></button><button class="tb" title="超链接"><svg><use href="#bolt"/></svg></button><button class="tb" title="HTML 弹出窗口"><svg><use href="#popup"/></svg></button>
      <i class="sep"></i>
      <button class="tb" title="测量"><svg><use href="#ruler"/></svg></button>
      <i class="sep"></i>
      <button class="tb" title="查找"><svg><use href="#bino"/></svg></button><button class="tb" title="查找路径"><svg><use href="#route"/></svg></button><button class="tb" title="转到 XY"><svg><use href="#xy"/></svg></button>
      <i class="sep"></i>
      <button class="tb" title="时间滑块"><svg><use href="#clock"/></svg></button>
      <i class="sep"></i>
      <button class="tb" title="查看器窗口"><svg><use href="#viewer"/></svg></button>
      <button class="more" title="工具条选项"></button>
    </div>
  </div>

  <div class="row row3">
    <div class="bar">
      <i class="grip"></i>
      <button class="tl">编辑器(R)<i class="dd"></i></button>
      <i class="sep"></i>
      <button class="tb" title="编辑工具"><svg><use href="#gcur"/></svg></button><button class="tb" title="编辑注记"><svg><use href="#gcura"/></svg></button>
      <i class="sep"></i>
      <button class="tb" title="直线段"><svg><use href="#seg"/></svg></button><button class="tb" title="弧段"><svg><use href="#arc"/></svg></button><button class="tb" title="追踪"><svg><use href="#poly"/></svg></button><i class="dd off"></i><button class="tb" title="点"><svg><use href="#burst"/></svg></button>
      <i class="sep"></i>
      <button class="tb" title="编辑折点"><svg><use href="#tri"/></svg></button><button class="tb" title="整形"><svg><use href="#tri2"/></svg></button><button class="tb" title="裁剪面"><svg><use href="#split"/></svg></button><button class="tb" title="分割"><svg><use href="#cross"/></svg></button><button class="tb" title="旋转"><svg><use href="#rot"/></svg></button>
      <i class="sep"></i>
      <button class="tb" title="属性"><svg><use href="#table"/></svg></button><button class="tb" title="草图属性"><svg><use href="#sketch"/></svg></button>
      <i class="sep"></i>
      <button class="tb" title="创建要素"><svg><use href="#form"/></svg></button>
      <button class="more" title="工具条选项"></button>
    </div>
    <div class="bar">
      <i class="grip"></i>
      <button class="tl">Network Analyst<i class="dd"></i></button>
      <i class="sep"></i>
      <button class="tb" title="网络分析窗口"><svg><use href="#nawin"/></svg></button>
      <i class="sep"></i>
      <button class="tb" title="创建网络位置"><svg><use href="#naadd"/></svg></button><button class="tb" title="选择网络位置"><svg><use href="#nasel"/></svg></button><button class="tb" title="求解"><svg><use href="#grid"/></svg></button><button class="tb" title="方向"><svg><use href="#dir"/></svg></button>
      <i class="sep"></i>
      <select class="nads" aria-label="网络数据集" disabled><option></option></select>
      <button class="tb" title="网络识别"><svg><use href="#griq"/></svg></button><button class="tb" title="构建网络"><svg><use href="#griw"/></svg></button>
      <button class="more" title="工具条选项"></button>
    </div>
    <div class="bar">
      <i class="grip"></i>
      <button class="tl">3D Analyst<i class="dd"></i></button>
      <i class="sep"></i>
      <div class="lyr"><svg><use href="#layer"/></svg><select aria-label="3D 图层"><option>栅格地表面_沿江建筑打断后</option></select></div>
      <button class="tb" title="等值线"><svg><use href="#contour"/></svg></button><button class="tb" title="最陡路径"><svg><use href="#steep"/></svg></button><button class="tb" title="通视线"><svg><use href="#los"/></svg></button><button class="tb" title="插入点"><svg><use href="#pt3"/></svg></button><button class="tb" title="插入线"><svg><use href="#ln3"/></svg></button><button class="tb" title="插入面"><svg><use href="#pg3"/></svg></button>
      <i class="sep"></i>
      <button class="tb" title="剖面图"><svg><use href="#plot"/></svg></button><i class="dd"></i>
      <i class="sep"></i>
      <button class="tb" title="ArcScene"><svg><use href="#scene"/></svg></button>
      <i class="sep"></i>
      <button class="tb" title="ArcGlobe"><svg><use href="#gl3"/></svg></button>
      <button class="more" title="工具条选项"></button>
    </div>
  </div>

  <div class="row row4">
    <div class="bar">
      <i class="grip"></i>
      <button class="tl">TIN 编辑(T)<i class="dd"></i></button>
      <i class="sep"></i>
      <button class="tb" title="添加 TIN 点"><svg><use href="#tin1"/></svg></button><button class="tb" title="添加 TIN 线"><svg><use href="#tin1"/></svg></button><button class="tb" title="添加 TIN 面"><svg><use href="#tin1"/></svg></button>
      <i class="sep"></i>
      <button class="tb" title="删除 TIN 结点"><svg><use href="#boxx"/></svg></button><button class="tb" title="按区域删除"><svg><use href="#boxd"/></svg></button><button class="tb" title="删除隔断线"><svg><use href="#boxx"/></svg></button>
      <i class="sep"></i>
      <button class="tb" title="移动结点"><svg><use href="#tin5"/></svg></button><button class="tb" title="连接结点"><svg><use href="#tin6"/></svg></button><button class="tb" title="交换边"><svg><use href="#tin7"/></svg></button><button class="tb" title="设置标签"><svg><use href="#tin7"/></svg></button><button class="tb" title="修改结点"><svg><use href="#tin9"/></svg></button><i class="dd off"></i><button class="tb" title="调整高度"><svg><use href="#tin8"/></svg></button>
      <button class="more" title="工具条选项"></button>
    </div>
    <div class="bar">
      <i class="grip tight"></i>
      <div class="lyr"><svg><use href="#layer"/></svg><select aria-label="分析图层"><option>栅格地表面_沿江建筑打断后</option></select></div>
      <button class="tb" title="等值线"><svg><use href="#contour"/></svg></button><button class="tb" title="直方图"><svg><use href="#bars"/></svg></button>
      <button class="more" title="工具条选项"></button>
    </div>
  </div>
</section>

<main>
  <aside class="toc">
    <div class="phead"><span>内容列表</span><button title="自动隐藏"><svg><use href="#pin"/></svg></button><button title="关闭"><svg><use href="#x"/></svg></button></div>
    <div class="ptools">
      <button class="tb" title="按绘制顺序列出"><svg><use href="#tocdraw"/></svg></button><button class="tb on" title="按源列出"><svg><use href="#tocsrc"/></svg></button><button class="tb" title="按可见性列出"><svg><use href="#tocvis"/></svg></button><button class="tb" title="按选择列出"><svg><use href="#tocsel"/></svg></button><i class="sep"></i><button class="tb" title="选项"><svg><use href="#opts"/></svg></button>
    </div>
    <div class="treebox">
      <ul class="tree">
        <li class="l0"><b class="pm"></b><svg><use href="#layers"/></svg><strong>图层</strong></li>
        <li class="l1"><b class="pm"></b><svg><use href="#folder"/></svg><span>E:\</span></li>
        <li class="l2"><b class="pm"></b><label><input type="checkbox" checked><span class="sel">游园视点</span></label></li>
        <li class="l2 sym"><i class="dot"></i></li>
        <li class="l1"><b class="pm"></b><svg><use href="#cyl"/></svg><span>E:\.</span></li>
        <li class="l2"><b class="pm"></b><svg><use href="#dset"/></svg><span>基础数据</span></li>
        <li class="l3"><b class="pm"></b><label><input type="checkbox" checked><span>建筑_沿江打断后</span></label></li>
        <li class="l3 sym"><i class="sw lav"></i></li>
        <li class="l3"><b class="pm"></b><label><input type="checkbox" checked><span>河流</span></label></li>
        <li class="l3 sym"><i class="sw navy"></i></li>
        <li class="l3"><b class="pm"></b><label><input type="checkbox" checked><span>游园</span></label></li>
        <li class="l3 sym"><i class="sw green"></i></li>
        <li class="l2"><b class="pm plus"></b><label><input type="checkbox" checked><span>栅格地表面_沿江建筑打断后</span></label></li>
      </ul>
      <div class="hscroll"><svg><use href="#left"/></svg><div class="track"><i class="thumb"></i></div><svg><use href="#right"/></svg></div>
    </div>
  </aside>

  <section class="view">
    <svg class="map" role="img" aria-label="地形高程图">
      <g transform="translate(250 55) scale(.33333 .35714)">
        <clipPath id="edge"><path d="M39 129L120 106 245 72 326 48H1440L1965 50 2238 72 2250 1470 2253 1992H60L54 1750 48 1550 42 1340 39 1190z"/></clipPath>
        <g clip-path="url(#edge)">
          <path fill="#f2ff00" d="M0 0H2300V2200H0z"/>
          <path fill="#ffdc00" d="M370 40L420 70 430 180 445 320H900V40z"/>
          <path fill="#d4930c" d="M675 40H958V80H675z"/>
          <path fill="#a6d800" d="M958 40H2300V80H958z"/>
          <path fill="#2e9e3e" d="M1284 50L1510 40H2300V80H1284z"/>
          <path fill="#a6f200" d="M0 140L245 72 300 105 350 145 388 180 405 220 415 280 430 310 436 420 440 500H2300V2200H0z"/>
          <path fill="#55e900" d="M0 140L120 108 200 120 270 155 320 210 330 265 358 315 372 390 380 480 390 530 415 605 440 650H2300V2200H0z"/>
          <path fill="#10dc00" d="M0 205L45 218 120 250 180 285 240 335 265 380 280 448 300 475 310 545 330 590 350 640 400 705 440 738H2300V2200H0z"/>
          <path fill="#0bca2f" d="M0 420L45 432 135 485 205 555 240 635 275 690 335 770 440 833H2300V2200H0z"/>
          <path fill="#17b963" d="M0 805L45 815 85 835 150 890 195 938 240 955 300 998 380 1010 440 1017H2300V2200H0z"/>
          <path fill="#1ea183" d="M0 1065L39 1073 110 1100 230 1115 320 1133 380 1142H2300V2200H0z"/>
          <path fill="#1c958f" d="M0 1245L250 1236 440 1226H2300V2200H0z"/>
          <path fill="#19768b" d="M0 1287L120 1275 250 1270 310 1256 390 1254 440 1247H2300V2200H0z"/>
          <path fill="#124f80" d="M0 1340H110L180 1325 245 1318 310 1298 440 1277H2300V2200H0z"/>
          <path fill="#0e2a7a" d="M0 1432L140 1430 240 1418 270 1408 440 1394H2300V2200H0z"/>
          <path fill="#002673" stroke="#6e6e6e" stroke-width="3" d="M60 1990L50 1468H140L180 1463 370 1450 440 1450 1176 1467 1300 1478 1554 1487 1800 1478 2100 1468 2249 1460 2251 1990z"/>
        </g>
        <path d="M250 1031H700V1113H250z" fill="#c9d2f5" stroke="#6e6e6e" stroke-width="3"/>
      </g>
    </svg>
    <div class="viewbar">
      <button class="vb on" title="数据视图"><svg viewBox="0 0 8 8"><path d="M.5.500h7v7h-7z" fill="#cfe39a" stroke="#333"/><path d="M3 7c0-3 2-2 3-5" stroke="#4e8f2f" fill="none"/></svg></button>
      <button class="vb" title="布局视图"><svg viewBox="0 0 8 8"><path d="M.5.500h5l2 2v5h-7z" fill="#fff" stroke="#333"/><path d="M2 4h4M2 6h2" stroke="#2a73b8"/></svg></button>
      <i class="sep"></i>
      <button class="vb" title="刷新"><svg viewBox="0 0 8 8"><path d="M.8 3.500C1.200.3 5 0 6.500 2V.5M7.200 4.500C6.800 7.700 3 8 1.500 6v1.500M6.800 2.300h-2M1.200 5.700h2" stroke="#134a7c" fill="none"/></svg></button>
      <button class="vb" title="暂停绘制"><svg viewBox="0 0 8 8"><path d="M1.500 1h2v6h-2zM5 1h2v6H5z" fill="#2a5fae"/></svg></button>
      <div class="hscroll"><svg><use href="#left"/></svg><div class="track"></div><svg><use href="#right"/></svg></div>
    </div>
  </section>

  <aside class="search">
    <div class="phead"><span>搜索</span><button title="自动隐藏"><svg class="side"><use href="#pin"/></svg></button><button title="关闭"><svg><use href="#x"/></svg></button></div>
    <div class="stools">
      <button class="tb" title="后退"><svg><use href="#bback"/></svg></button><button class="tb" title="前进"><svg><use href="#gfwd"/></svg></button><i class="sep"></i><button class="tb" title="主页"><svg><use href="#home"/></svg></button><button class="tb" title="刷新"><svg><use href="#refresh"/></svg></button><i class="sep"></i><button class="tb" title="选项"><svg><use href="#opts"/></svg></button><i class="dd big"></i>
      <select aria-label="搜索范围"><option>本地搜索</option></select>
    </div>
    <div class="sbody">
      <div class="scontent">
        <nav class="tabs"><b>全部</b><a href="#map">地图</a><a href="#data">数据</a><a href="#tool">工具</a><a href="#image">图像</a></nav>
        <form class="query">
          <div class="qbox"><input type="text" value="视域" aria-label="搜索内容"><button type="button" title="清除"><svg><use href="#x"/></svg></button></div>
          <button type="button" class="go" title="搜索"><svg viewBox="0 0 22 22"><circle cx="11" cy="11" r="10" fill="url(#lens)" stroke="#7aa9c4"/><circle cx="9.500" cy="9" r="3.800" fill="#eefaff" stroke="#1d6698" stroke-width="1.800"/><path d="M12 12l4.500 4.500" stroke="#1d6698" stroke-width="2.600"/></svg></button>
        </form>
        <div class="range"><a href="#range">任何范围</a><i class="dd big"></i></div>
        <div class="found"><a href="#results">返回的搜索结果 4 项</a><i class="dd big"></i><a class="sort" href="#sort">排序方式</a><i class="dd big"></i></div>
        <ul class="results">
          <li><svg><use href="#hammer"/></svg><div><h3><a class="hot" href="#r1"><b>视域</b> (3D Analyst) </a>(工具)</h3><p>确定对一组观察点要素可见的栅格表面位置。</p><p class="path">工具箱\系统工具箱\3d analyst tools.tbx\可见...</p></div></li>
          <li><svg><use href="#hammer"/></svg><div><h3><a href="#r2"><b>视域</b> (Spatial Analyst)</a> (工具)</h3><p>确定对一组观察点要素可见的栅格表面位置。</p><p class="path">工具箱\系统工具箱\spatial analyst tools.tbx\...</p></div></li>
          <li><svg><use href="#hammer"/></svg><div><h3><a href="#r3">视点分析 (3D Analyst)</a> (工具)</h3><p>识别从各栅格表面位置进行观察时可见的观察点。</p><p class="path">工具箱\系统工具箱\3d analyst tools.tbx\可见...</p></div></li>
          <li><svg><use href="#hammer"/></svg><div><h3><a href="#r4">太阳辐射图 (空间分析)</a> (工具)</h3><p>获得用于计算直接太阳辐射、散射太阳辐射和太阳...</p><p class="path">工具箱\系统工具箱\spatial analyst tools.tbx\...</p></div></li>
        </ul>
      </div>
      <div class="vscroll"><svg><use href="#up"/></svg><svg><use href="#down"/></svg></div>
    </div>
  </aside>

  <div class="dock">
    <button><svg><use href="#wcat"/></svg><span>目录</span></button>
    <button><svg><use href="#wsearch"/></svg><span>搜索</span></button>
  </div>
</main>

<footer class="status"><i class="cell wide"></i><i class="cell"></i><output>533.709&nbsp;&nbsp; 941.557 米</output></footer>

<section class="dialog" role="dialog" aria-label="视域">
  <div class="dtitle">
    <svg><use href="#hammer"/></svg><h2>视域</h2>
    <div class="dctl">
      <button title="最小化"><svg viewBox="0 0 14 14"><path d="M1 7.500h12"/></svg></button>
      <button title="最大化"><svg viewBox="0 0 14 14"><path d="M1.500 1.500h11v11h-11z"/></svg></button>
      <button title="关闭"><svg viewBox="0 0 14 14"><path d="M1 1l12 12M13 1L1 13"/></svg></button>
    </div>
  </div>
  <div class="dbody">
    <div class="dpane">
      <form class="params">
        <label for="p1">输入栅格</label>
        <div class="field"><select id="p1"><option>栅格地表面_沿江建筑打断后</option></select><button type="button" class="browse" title="浏览"><svg><use href="#open"/></svg></button></div>
        <label for="p2">输入观察点或观察折线要素</label>
        <div class="field"><select id="p2"><option>游园视点</option></select><button type="button" class="browse" title="浏览"><svg><use href="#open"/></svg></button></div>
        <label for="p3">输出栅格</label>
        <div class="field"><input class="mono" type="text" id="p3" value="E:\&nbsp;&nbsp;&nbsp;&nbsp;&nbsp;&nbsp;&nbsp;&nbsp;&nbsp;&nbsp;\my_work\ch07\区域视域分析"><button type="button" class="browse" title="浏览"><svg><use href="#open"/></svg></button></div>
        <label for="p4">输出地平面以上的栅格&nbsp; (可选)</label>
        <div class="field"><input type="text" id="p4"><button type="button" class="browse" title="浏览"><svg><use href="#open"/></svg></button></div>
        <label for="p5">Z 因子&nbsp; (可选)</label>
        <input class="num" type="text" id="p5" value="1">
        <label class="chk"><input type="checkbox" disabled>使用地球曲率校正&nbsp; (可选)</label>
        <label for="p6">折射系数&nbsp; (可选)</label>
        <input class="num" type="text" id="p6" value="0.13" disabled>
      </form>
      <div class="vscroll"><svg><use href="#up"/></svg><svg><use href="#down"/></svg></div>
    </div>
    <div class="dhelp">
      <article><h3>输出栅格</h3><p>输出栅格。</p><p>输出将只记录输入表面栅格中每个像元位置对于输入观测点（或折线的折点）可见的次数。观测频数将记录在输出栅格属性表的 VALUE 项中。</p></article>
      <div class="vscroll"><svg><use href="#up"/></svg><svg><use href="#down"/></svg></div>
    </div>
  </div>
  <div class="dfoot"><button class="b1">确定</button><button class="b1">取消</button><button class="b2">环境...</button><button class="b3">&lt;&lt; 隐藏帮助</button><button class="b4">工具帮助</button></div>
</section>

<svg class="bird" viewBox="0 0 62 70" aria-hidden="true"><path d="M31 1l26 14q4 2 4 6v28q0 4-4 6L35 68q-4 2-8 0L5 55q-4-2-4-6V21q0-4 4-6L27 2q4-2 8 0z" fill="url(#bird)"/><path d="M31 5l23 12q3 2 3 5v26q0 3-3 5L34 64q-3 2-6 0L8 53q-3-2-3-5V22q0-3 3-5L28 5q3-2 6 0z" fill="none" stroke="#9cc3ff"/><path d="M7 20c6-1 12 1 17 6 2-3 6-2 9 1L51 13c-1 10-3 16-7 21l10 5-16 4c2 6 3 11 3 18L31 46c-4 0-7-4-7-10 0-5-1-8-17-16z" fill="#fff"/></svg>

<i class="mark m-search"></i><i class="mark m-dock"></i><i class="mark m-form"></i><i class="mark m-ok"></i>
<p class="note n1">1.在搜索面板中输入视域，点击视域</p>
<p class="note n2">2.输入红框内的内容</p>
<p class="note n3">3.点击确定</p>
<span class="one">1</span>
<p class="water">CSDN @关于作业的二三事</p>
</body>
</html>
```
FILE: styles.css
```css
* { box-sizing: border-box; }
body {
  margin: 0; height: 100vh; overflow: hidden; position: relative;
  display: flex; flex-direction: column;
  background: linear-gradient(90deg, #f0f0f0 0, #f0f0f0 25%, #fafafa 72%);
  font: 12px/16px "Open Sans", "Noto Sans CJK SC", sans-serif; color: #000;
}
button { border: 0; background: none; padding: 0; margin: 0; font: inherit; color: inherit; }
select, input { font: inherit; color: inherit; margin: 0; border-radius: 0; }
select { appearance: none; }
i { font-style: normal; display: block; }
p, h1, h2, h3, ul { margin: 0; padding: 0; }
ul { list-style: none; }
a { color: #0563c9; }
svg { display: block; flex: none; }
.defs { position: absolute; width: 0; height: 0; }

/* title and menu */
.titlebar { height: 29px; flex: none; background: #fff; display: flex; align-items: center; padding-left: 2px; }
.appicon { width: 20px; height: 20px; }
.titlebar h1 { font-size: 15px; line-height: 20px; font-weight: 400; margin-left: 5px; flex: 1; }
.winctl { display: flex; gap: 8px; padding-right: 8px; }
.winctl button { width: 50px; height: 28px; display: grid; place-items: center; }
.winctl svg, .dctl svg { width: 14px; height: 14px; fill: none; stroke: #111; }
.menu { display: flex; gap: 17px; height: 27px; flex: none; align-items: center; padding-left: 12px; }

/* tool bars */
.rows { flex: none; }
.row { display: flex; height: 27px; gap: 3px; align-items: center; }
.row1 { padding-left: 148px; height: 26px; }
.row3 { padding-left: 174px; }
.row4 { padding-left: 1220px; gap: 10px; }
.bar { display: flex; align-items: center; height: 25px; background: linear-gradient(#fbfbfb, #f2f2f2); border-radius: 2px; }
.grip { width: 3px; height: 17px; margin: 0 0 0 4px; background: repeating-linear-gradient(#b8b8b8 0 2px, transparent 2px 5px); }
.row2 .grip { margin-left: 6px; }
.grip.tight { margin: 0 1px 0 4px; }
.tb { width: 22px; height: 22px; display: grid; place-items: center; flex: none; }
.tb svg { width: 16px; height: 16px; }
.tb.on { background: #dcebf8; border: 1px solid #0078d7; }
.row1 .bar:first-child .tb.on { background: #e5edf5; border-color: #90b5d4; }
.sep { width: 6px; height: 18px; flex: none; background: linear-gradient(#b5b5b5, #b5b5b5) center / 1px 100% no-repeat; }
.dd { width: 11px; height: 22px; flex: none; display: grid; place-items: center; }
.dd::before { content: ""; border: 3px solid transparent; border-top: 4px solid #111; border-bottom: 0; }
.dd.off::before { border-top-color: #999; }
.dd.big { width: 14px; }
.dd.big::before { border-width: 5px 4px 0; }
.more { width: 11px; height: 25px; margin-left: 2px; background: linear-gradient(#f4f4f4, #a8a8a8); display: flex; flex-direction: column; align-items: center; justify-content: flex-end; gap: 2px; padding-bottom: 4px; }
.more::before { content: ""; width: 7px; height: 2px; background: #000; }
.more::after { content: ""; border: 3px solid transparent; border-top: 4px solid #000; border-bottom: 0; }
.tl { display: flex; align-items: center; padding: 0 2px 0 5px; height: 22px; white-space: nowrap; }
.pct, .scale, .nads, .stools select {
  border: 1px solid #d0d0d0; height: 22px; padding: 0 2px;
  background: #fff url("data:image/svg+xml,%3Csvg xmlns='http://www.w3.org/2000/svg' width='10' height='10'%3E%3Cpath d='M1 3l4 4 4-4' fill='none' stroke='%23777'/%3E%3C/svg%3E") right 4px center no-repeat;
}
.pct { width: 60px; color: #777; font-family: "Liberation Mono", monospace; font-size: 11px; }
.scale { width: 148px; height: 25px; border: 2px solid #7a7a7a; font-family: "Liberation Mono", monospace; font-size: 13px; }
.nads { width: 180px; height: 21px; background-color: #ccc; border-color: #bbb; opacity: 1; }
.lyr { position: relative; width: 180px; height: 22px; display: flex; align-items: center; background: #fff; border: 1px solid #777; border-right-color: #ddd; border-bottom-color: #ddd; padding-left: 1px; }
.lyr svg { width: 16px; height: 16px; }
.lyr select { flex: 1; min-width: 0; border: 0; height: 20px; padding: 0 20px 0 5px; font-size: 15px; line-height: 20px; background: linear-gradient(#f0f0f0, #f0f0f0) right / 17px 100% no-repeat; overflow: hidden; text-overflow: clip; }
.lyr::after { content: ""; position: absolute; right: 4px; top: 7px; border: 5px solid transparent; border-top: 6px solid #000; border-bottom: 0; }

/* docked panels */
main { flex: 1; min-height: 0; display: flex; }
.phead { height: 22px; flex: none; display: flex; align-items: center; gap: 4px; padding: 0 3px 0 4px; background: linear-gradient(90deg, #bccad9, #d8e5f2); }
.phead span { flex: 1; }
.phead svg { width: 12px; height: 12px; }
.phead .side { transform: rotate(90deg); }
.toc { width: 264px; flex: none; display: flex; flex-direction: column; padding-bottom: 1px; }
.ptools { height: 25px; flex: none; display: flex; align-items: center; padding-left: 4px; background: linear-gradient(#fbfbfb, #f2f2f2); }
.ptools .sep { height: 14px; }
.treebox { flex: 1; border: 1px solid #828790; background: #fff; display: flex; flex-direction: column; justify-content: space-between; margin-right: 1px; padding: 2px 1px 1px; }
.tree li { display: flex; align-items: center; height: 20px; gap: 5px; }
.tree label { display: flex; align-items: center; gap: 5px; }
.tree svg { width: 16px; height: 14px; }
.tree span { padding: 0 2px; line-height: 19px; margin-left: 1px; }
.tree svg + span { margin-left: -2px; }
.tree .sel { background: #0078d7; color: #fff; }
.l0 { padding-left: 7px; } .l1 { padding-left: 26px; } .l2 { padding-left: 45px; } .l3 { padding-left: 64px; }
.l2.sym { padding-left: 78px; } .l3.sym { padding-left: 96px; }
.pm { width: 9px; height: 9px; border: 1px solid #969696; border-radius: 1px; margin-right: 1px; background: linear-gradient(#3b5a94, #3b5a94) center / 5px 1px no-repeat, #fff; }
.pm.plus { background: linear-gradient(#3b5a94, #3b5a94) center / 5px 1px no-repeat, linear-gradient(#3b5a94, #3b5a94) center / 1px 5px no-repeat, #fff; }
.tree input { appearance: none; width: 12px; height: 12px; margin-left: 1px; border: 1px solid #000; background: #fff url("data:image/svg+xml,%3Csvg xmlns='http://www.w3.org/2000/svg' viewBox='0 0 10 10'%3E%3Cpath d='M2 4.500l2 3 4.500-5.500' fill='none' stroke='%23000' stroke-width='1.900'/%3E%3C/svg%3E"); }
.dot { width: 8px; height: 8px; border: 2px solid #000; border-radius: 3px; background: #a0109a; }
.sw { width: 15px; height: 11px; border: 1px solid #6e6e6e; }
.lav { background: #c9d2f5; } .navy { background: #002673; } .green { background: #6a9f48; border-color: #8fc873; }
.hscroll { flex: 1; display: flex; align-items: center; height: 18px; background: #f0f0f0; }
.treebox .hscroll { flex: none; height: 20px; padding: 0 3px 5px; gap: 2px; }
.hscroll svg { width: 12px; height: 12px; }
.track { flex: 1; height: 15px; }
.thumb { width: 54%; height: 15px; background: #cdcdcd; }

.view { flex: 1; min-width: 0; margin: 0 3px 2px 4px; border: 2px solid #696969; border-right: 1px solid #e3e3e3; border-bottom: 1px solid #e3e3e3; background: #fff; display: flex; flex-direction: column; }
.map { flex: 1; min-height: 0; width: 100%; }
.viewbar { height: 20px; flex: none; display: flex; align-items: flex-start; background: #f0f0f0; border-top: 1px solid #e3e3e3; }
.vb { width: 17px; height: 15px; display: grid; place-items: center; }
.vb svg { width: 9px; height: 9px; }
.vb.on { background: #c2dcf5; }
.viewbar .sep { height: 14px; width: 8px; }
.viewbar .hscroll { gap: 3px; padding-left: 3px; }
.viewbar .track { height: 18px; background: #cdcdcd; }

.search { width: 300px; flex: none; display: flex; flex-direction: column; padding-bottom: 1px; }
.search .phead { background: linear-gradient(90deg, #99b4d1, #b9d1ea); }
.stools { height: 28px; flex: none; display: flex; align-items: center; background: #f0f0f0; padding-right: 1px; }
.stools .sep { width: 7px; height: 24px; background-image: linear-gradient(#888, #888); }
.stools select { flex: 1; height: 23px; background-color: #e3e3e3; border: 1px solid #a0a0a0; font-size: 12px; margin-left: 5px; }
.sbody { flex: 1; display: flex; min-height: 0; }
.scontent { flex: 1; min-width: 0; background: #fff; border-top: 1px solid #aaa; border-bottom: 1px solid #aaa; margin-bottom: 17px; }
.vscroll { width: 16px; flex: none; display: flex; flex-direction: column; justify-content: space-between; align-items: center; background: #f7f7f7; padding: 14px 0; }
.vscroll svg { width: 12px; height: 12px; }
.tabs { display: flex; gap: 19px; padding: 6px 10px 0; font-size: 9px; line-height: 14px; }
.query { display: flex; align-items: center; gap: 10px; padding: 5px 0 0 9px; }
.qbox { width: 220px; height: 23px; border: 1px solid #a0a0a0; border-top: 2px solid #696969; border-left: 2px solid #696969; display: flex; align-items: center; padding-right: 4px; }
.qbox input { flex: 1; min-width: 0; border: 0; padding: 0 1px; font-size: 13px; color: #1a1a6e; outline: 0; }
.qbox svg { width: 11px; height: 11px; color: #1a1a6e; }
.go svg { width: 22px; height: 22px; }
.range { display: flex; align-items: center; height: 22px; padding-left: 9px; font-size: 10px; line-height: 12px; }
.found { display: flex; align-items: center; height: 24px; margin-top: 7px; padding: 0 10px 0 9px; background: #f0f0f0; border-top: 1px solid #aaa; border-bottom: 1px solid #aaa; font: 9px/12px "DejaVu Sans", "Noto Sans CJK SC", sans-serif; }
.sort { margin-left: auto; }
.results li { height: 56px; display: flex; gap: 4px; padding: 2px 0 0 5px; }
.results li:first-child { height: 53px; padding-top: 0; }
.results li:nth-child(even) { background: #ededed; }
.results svg { width: 17px; height: 18px; margin-top: 1px; }
.results div { min-width: 0; flex: 1; }
.results h3 { font: 12px/15px "DejaVu Sans", "Noto Sans CJK SC", sans-serif; color: #008000; white-space: nowrap; }
.results a { text-decoration: none; }
.results .hot { color: #008000; border-bottom: 1px solid #008000; }
.results p { font: 11px/15px "DejaVu Sans", "Noto Sans CJK SC", sans-serif; color: #0b2f66; white-space: nowrap; }
.results .path { color: #008000; }
.dock { width: 22px; flex: none; padding: 3px 0 0 2px; background: #f5f5f5; }
.dock button { width: 20px; height: 52px; border: 1px solid #999; border-right: 0; border-radius: 5px 0 0 5px; display: flex; flex-direction: column; align-items: center; gap: 3px; padding-top: 3px; color: #555; background: #f0f0f0; }
.dock svg { width: 16px; height: 16px; }
.dock span { writing-mode: vertical-rl; text-orientation: sideways; font-size: 12px; line-height: 14px; }

.status { height: 20px; flex: none; background: #f0f0f0; display: flex; align-items: center; justify-content: flex-end; gap: 2px; padding-right: 167px; }
.cell { width: 18px; height: 18px; border: 1px solid #f7f7f7; }
.cell.wide { width: 126px; }
.status output { padding-left: 3px; white-space: nowrap; }

/* tool dialog */
.dialog { position: absolute; left: 667px; top: 238px; width: 925px; height: 506px; background: #f0f0f0; border: 1px solid #8c8c8c; box-shadow: 0 2px 10px rgba(0,0,0,.4); display: flex; flex-direction: column; }
.dtitle { height: 38px; flex: none; background: #fff; display: flex; align-items: center; padding-left: 8px; gap: 4px; }
.dtitle > svg { width: 20px; height: 20px; }
.dtitle h2 { font-size: 15px; line-height: 20px; font-weight: 400; color: #999; flex: 1; }
.dctl { display: flex; gap: 9px; padding-right: 5px; }
.dctl button { width: 50px; height: 30px; display: grid; place-items: center; }
.dctl svg { stroke: #999; }
.dbody { flex: 1; min-height: 0; display: flex; gap: 3px; border-bottom: 1px solid #fff; }
.dpane, .dhelp { display: flex; border: 2px solid #696969; border-right: 2px solid #fff; border-bottom: 1px solid #e3e3e3; }
.dpane { flex: 1; }
.params { flex: 1; display: flex; flex-direction: column; padding: 8px 10px 0 18px; font-family: "Noto Sans CJK SC", sans-serif; font-size: 15px; line-height: 22px; }
.params > label { height: 22px; flex: none; }
.field { display: flex; gap: 10px; align-items: center; height: 30px; padding-right: 2px; }
.field select, .field input { flex: 1; min-width: 0; height: 24px; padding: 0 2px; line-height: 20px; }
.field select { padding-bottom: 3px; border: 2px solid #696969; border-right: 1px solid #fff; border-bottom: 1px solid #fff; background: url("data:image/svg+xml,%3Csvg xmlns='http://www.w3.org/2000/svg' width='17' height='21'%3E%3Cpath d='M0 0h17v21H0z' fill='%23f0f0f0'/%3E%3Cpath d='M0 20h17' stroke='%23696969' stroke-width='2'/%3E%3Cpath d='M4 8h9l-4.500 5z'/%3E%3C/svg%3E") right top no-repeat #fff; }
.field input, .num { border: 1px solid #7a7a7a; background: #fff; }
.params .mono { font-family: "Liberation Mono", "Noto Sans CJK SC", monospace; font-size: 14px; padding-bottom: 2px; }
.browse { width: 26px; height: 30px; background: #e1e1e1; border: 1px solid #adadad; display: grid; place-items: center; }
.browse svg { width: 17px; height: 17px; }
.num { height: 24px; margin: -2px 0 0; padding: 0 4px; text-align: right; flex: none; font-family: "Liberation Mono", monospace; font-size: 14px; }
.num:disabled { background: #f0f0f0; border-color: #ccc; color: #6d6d6d; }
.params .chk { display: flex; align-items: center; gap: 5px; color: #6d6d6d; margin: 10px 0 9px 3px; }
.chk input { appearance: none; width: 16px; height: 16px; background: #fff; border: 1px solid #ccc; }
.dhelp { width: 238px; background: #fff; }
.dhelp article { flex: 1; padding: 6px 12px 0 15px; font: 13px/15px "Liberation Sans", "Noto Sans CJK SC", sans-serif; }
.dhelp h3 { font-size: 17px; line-height: 20px; }
.dhelp p { margin-top: 18px; }
.dfoot { height: 53px; flex: none; display: flex; gap: 7px; padding: 12px 0 0 267px; }
.dfoot button { height: 26px; background: #e1e1e1; border: 1px solid #adadad; font-size: 14px; line-height: 20px; }
.b1 { width: 86px; } .b2 { width: 103px; } .b3 { width: 112px; } .b4 { width: 117px; margin-left: 16px; }

/* annotations drawn over the windows */
.mark { position: absolute; border: 1px solid #ee1c24; }
.m-search { left: 1587px; top: 230px; width: 325px; height: 136px; }
.m-dock { left: 1891px; top: 223px; width: 27px; height: 76px; }
.m-form { left: 678px; top: 294px; width: 671px; height: 162px; }
.m-ok { left: 939px; top: 694px; width: 86px; height: 37px; }
.note { position: absolute; color: #4348cc; font-size: 23px; line-height: 30px; white-space: nowrap; }
.n1 { left: 1485px; top: 560px; }
.n2 { left: 741px; top: 243px; }
.n3 { left: 937px; top: 663px; }
.bird { position: absolute; left: 1817px; top: 535px; width: 62px; height: 70px; }
.one { position: absolute; left: 1736px; top: 994px; color: #f00; font-size: 10px; line-height: 14px; }
.water { position: absolute; right: 16px; bottom: 6px; font: 19px/26px "Liberation Sans", "Noto Sans CJK SC", sans-serif; color: rgba(120,120,120,.75); }
```
